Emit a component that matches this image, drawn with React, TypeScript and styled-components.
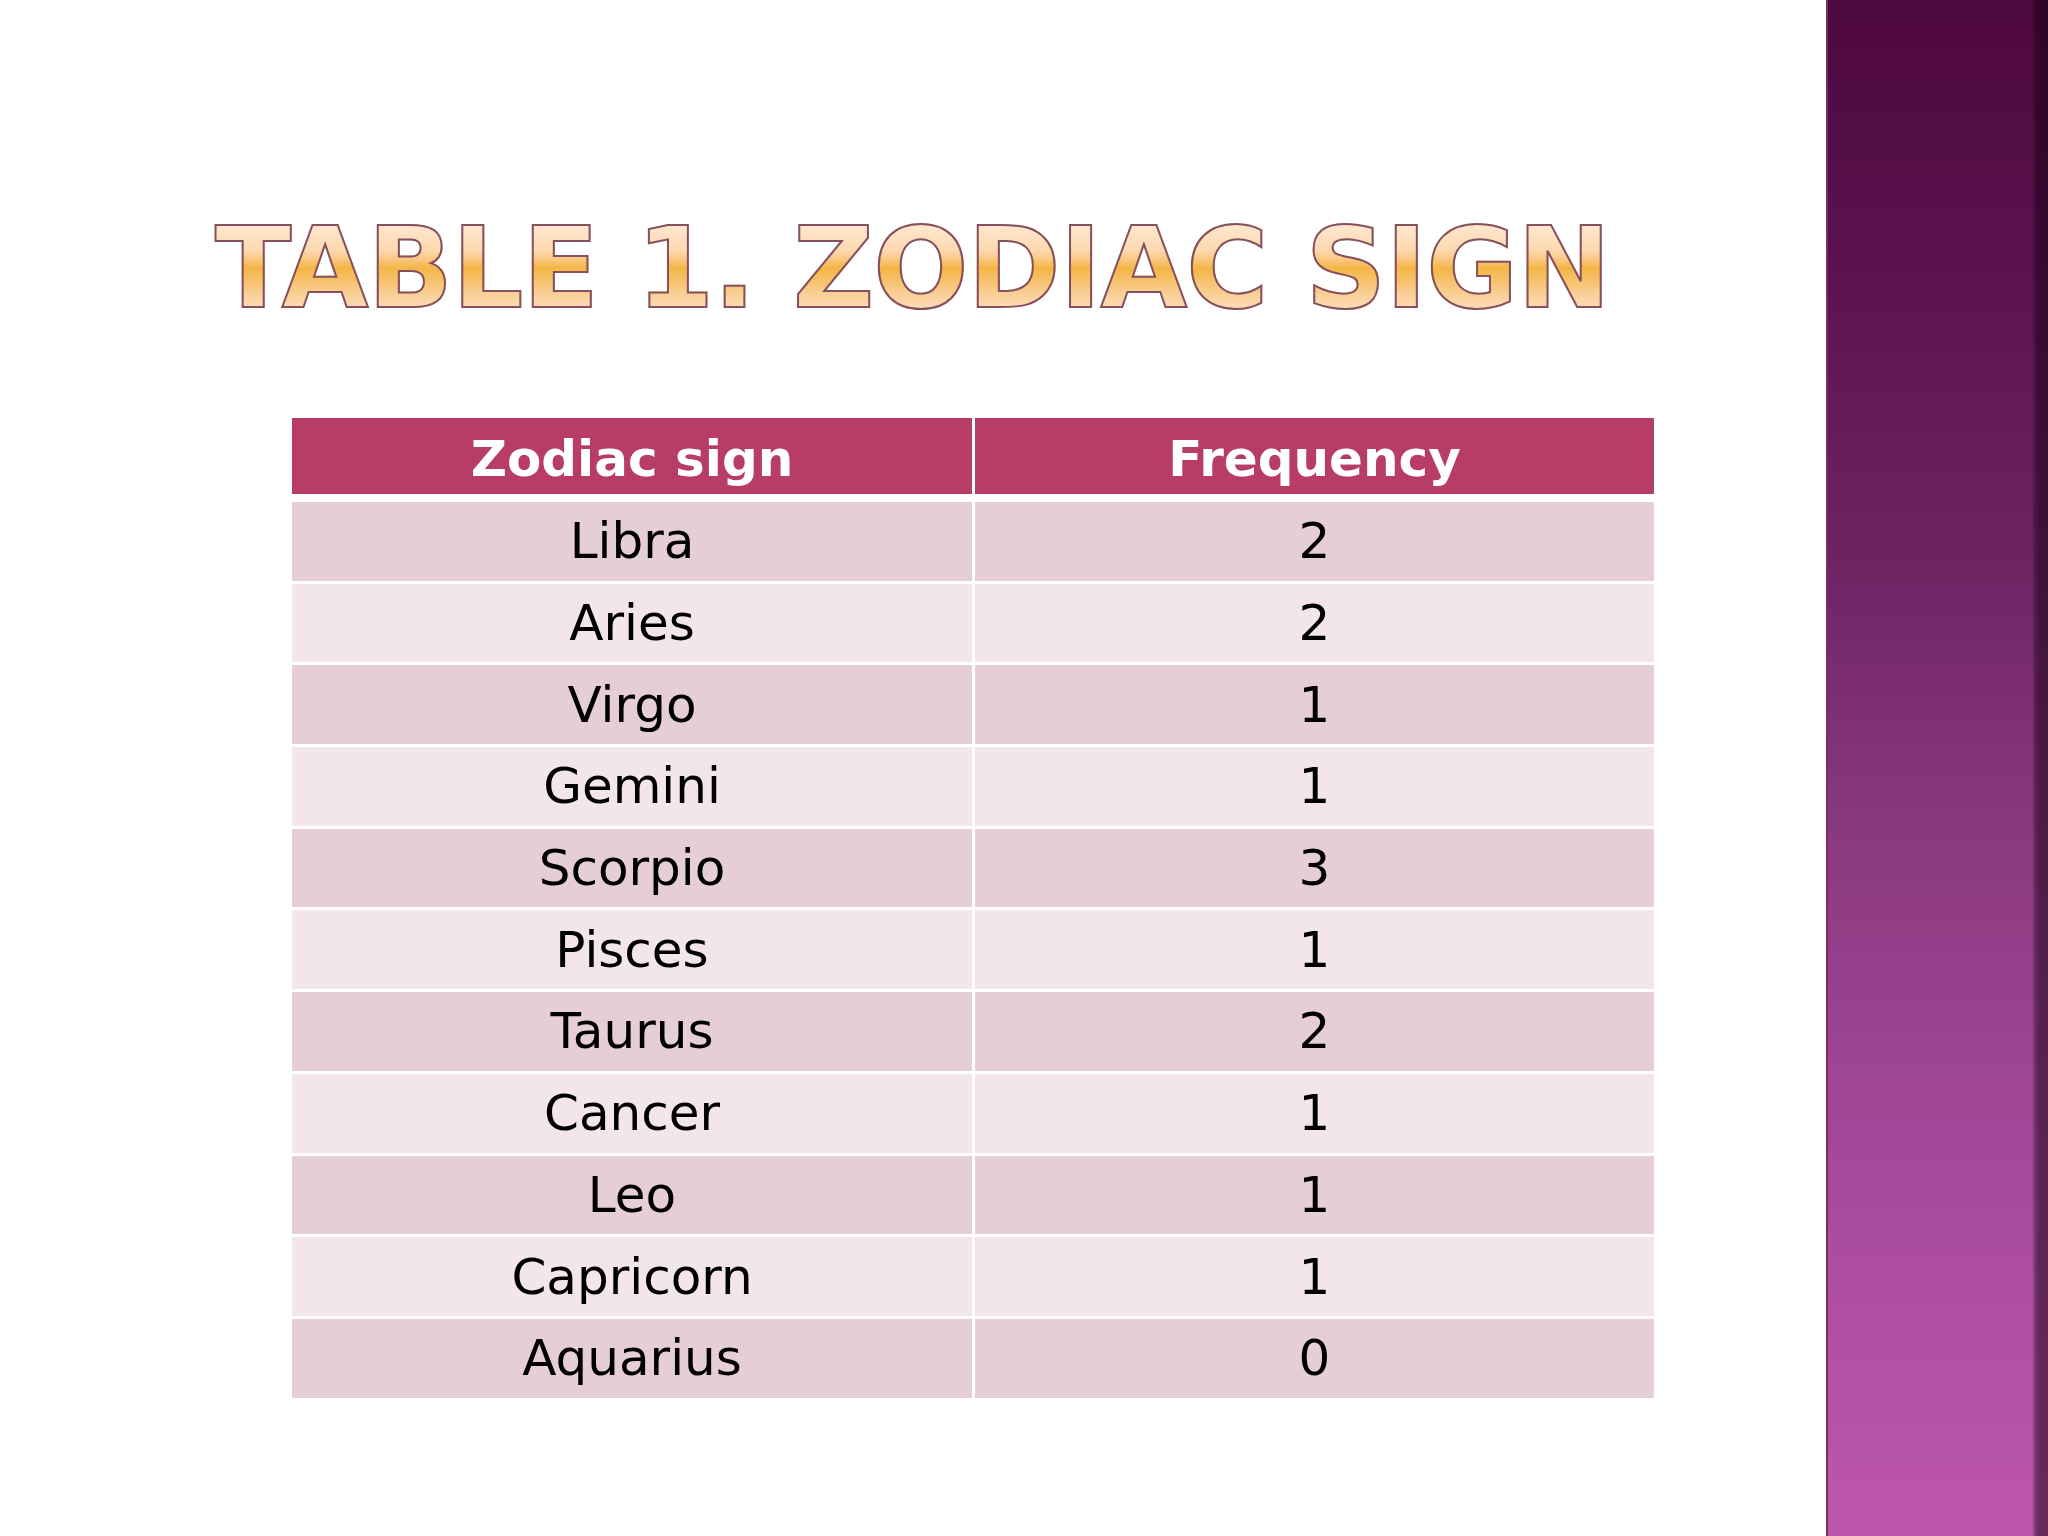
import styled, { createGlobalStyle } from "styled-components";

const GlobalStyle = createGlobalStyle`
  html, body {
    margin: 0;
    padding: 0;
    background: #ffffff;
    overflow: hidden;
  }
  body {
    font-family: "DejaVu Sans", Verdana, sans-serif;
  }
`;

const Slide = styled.div`
  width: 100vw;
  height: 100vh;
  min-height: 1536px;
  display: flex;
  overflow: hidden;
`;

const Content = styled.main`
  flex: 1;
  display: flex;
  flex-direction: column;
  background: #ffffff;
`;

const Title = styled.h1`
  margin: 212px 0 0 215px;
  align-self: flex-start;
  font-family: "DejaVu Sans", Verdana, sans-serif;
  font-weight: bold;
  font-size: 112px;
  line-height: 1;
  letter-spacing: -0.9px;
  white-space: nowrap;
  color: transparent;
  background: linear-gradient(
    180deg,
    #fee9d6 0%,
    #fee5cc 14%,
    #fdd9b0 34%,
    #f9c884 42%,
    #f4b645 50%,
    #f6c067 60%,
    #fad09a 74%,
    #fddcb6 86%,
    #fee4c8 100%
  );
  -webkit-background-clip: text;
  background-clip: text;
  -webkit-text-stroke: 2px #86505f;
`;

const Table = styled.div`
  margin: 94px 0 0 292px;
  width: 1362px;
  display: grid;
  grid-template-columns: 680px 679px;
  column-gap: 3px;
  row-gap: 3px;
`;

const HeadCell = styled.div`
  height: 76px;
  margin-bottom: 5px;
  padding-top: 6px;
  box-sizing: border-box;
  display: flex;
  align-items: center;
  justify-content: center;
  background: #b83d64;
  color: #ffffff;
  font-weight: bold;
  font-size: 50px;
`;

const Cell = styled.div<{ $odd: boolean }>`
  height: 78.7px;
  display: flex;
  align-items: center;
  justify-content: center;
  background: ${(p) => (p.$odd ? "#e6ced7" : "#f2e6eb")};
  color: #000000;
  font-size: 50px;
`;

const SidePanel = styled.aside`
  width: 222px;
  flex-shrink: 0;
  display: flex;
  justify-content: flex-end;
  background: linear-gradient(
    180deg,
    #4d083d 0%,
    #5a1350 18%,
    #6c2362 36%,
    #86377b 52%,
    #9e4594 70%,
    #b04fa4 86%,
    #bc56ab 100%
  );
  border-left: 2px solid #7d2a6f;
  box-sizing: border-box;
`;

const EdgeShade = styled.div`
  width: 16px;
  flex-shrink: 0;
  background: linear-gradient(
    90deg,
    rgba(20, 0, 15, 0) 0%,
    rgba(20, 0, 15, 0.35) 20%,
    rgba(20, 0, 15, 0.5) 45%,
    rgba(20, 0, 15, 0.52) 100%
  );
`;

const rows: [string, number][] = [
  ["Libra", 2],
  ["Aries", 2],
  ["Virgo", 1],
  ["Gemini", 1],
  ["Scorpio", 3],
  ["Pisces", 1],
  ["Taurus", 2],
  ["Cancer", 1],
  ["Leo", 1],
  ["Capricorn", 1],
  ["Aquarius", 0],
];

export default function App() {
  return (
    <>
      <GlobalStyle />
      <Slide>
        <Content>
          <Title>TABLE 1. ZODIAC SIGN</Title>
          <Table>
            <HeadCell>Zodiac sign</HeadCell>
            <HeadCell>Frequency</HeadCell>
            {rows.flatMap(([sign, freq], i) => [
              <Cell key={sign + "-s"} $odd={i % 2 === 0}>
                {sign}
              </Cell>,
              <Cell key={sign + "-f"} $odd={i % 2 === 0}>
                {freq}
              </Cell>,
            ])}
          </Table>
        </Content>
        <SidePanel>
          <EdgeShade />
        </SidePanel>
      </Slide>
    </>
  );
}
